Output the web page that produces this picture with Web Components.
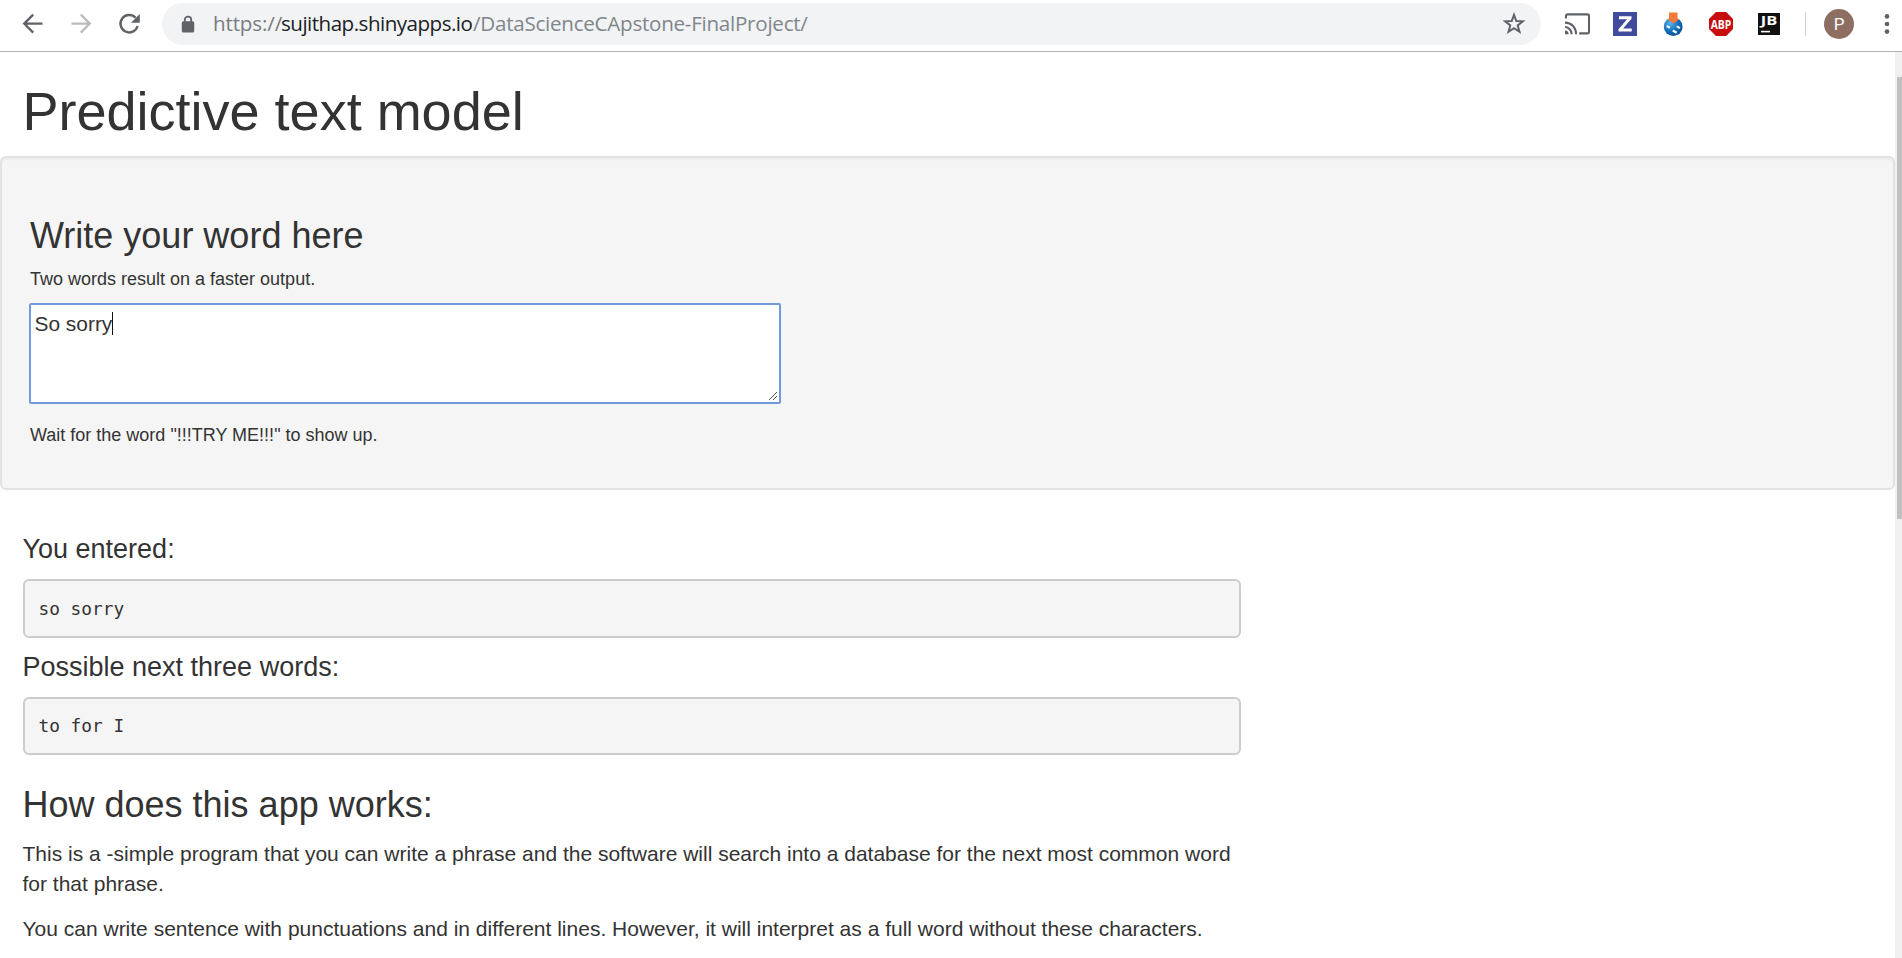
<!DOCTYPE html>
<html lang="en">
<head>
<meta charset="utf-8">
<title>Predictive text model</title>
<style>
html,body{margin:0;height:100%;overflow:hidden;background:#fff}
body{font-family:"Liberation Sans",Arial,sans-serif;color:#333}
</style>
</head>
<body>
<browser-window>
  <browser-toolbar slot="toolbar"></browser-toolbar>
  <predictive-page></predictive-page>
</browser-window>
<script>
function define(name, html) {
  const template = document.createElement('template');
  template.innerHTML = html.trim();
  customElements.define(name, class extends HTMLElement {
    constructor() {
      super();
      this.attachShadow({mode: 'open'}).append(template.content.cloneNode(true));
    }
  });
}

define('browser-window', `
<style>
:host{display:flex;flex-direction:column;height:958px;width:1902px;overflow:hidden}
.view{display:flex;flex:1;min-height:0}
.content{width:1895px;overflow:hidden}
.track{width:7px;background:#f1f1f1;box-sizing:border-box;padding:25px 0 0 2px}
.thumb{height:442px;background:#c1c1c1}
</style>
<slot name="toolbar"></slot>
<div class="view"><div class="content"><slot></slot></div><div class="track"><div class="thumb"></div></div></div>`);

define('browser-toolbar', `
<style>
:host{display:flex;align-items:flex-start;height:51px;flex:none;border-bottom:1px solid #b0b1b3;background:#fff}
svg{display:block;flex:none}
.nav{display:flex;width:162px;height:48px;box-sizing:border-box;padding-left:17px;gap:16px;align-items:center}
.tools{display:flex;height:48px;align-items:center;flex:1;padding-left:20px}
.tools svg{width:32px;height:32px;margin-right:16px}
.sep{width:1px;height:24px;background:#cfcfcf;margin:0 18px 0 4px;flex:none}
.avatar{width:30px;height:30px;border-radius:50%;background:#8d6e63;color:#fff;font:17px/30px Roboto,sans-serif;text-align:center;flex:none}
.tools svg.menu{width:10px;margin:0 0 0 28px}
text{font-family:"Open Sans",sans-serif;font-weight:700;fill:#fff;text-anchor:middle}
</style>
<div class="nav">
  <svg width="32" height="32" viewBox="0 0 32 32" fill="none" stroke="#5f6368" stroke-width="2.3"><path d="M25.5 15.6H7.5M16.2 6.6L7.2 15.6l9 9"/></svg>
  <svg width="32" height="32" viewBox="0 0 32 32" fill="none" stroke="#babcbe" stroke-width="2.3"><path d="M6.5 15.6h18M15.8 6.6l9 9-9 9"/></svg>
  <svg width="32" height="32" viewBox="0 0 32 32"><path d="M22.6 9.8A8.7 8.7 0 1 0 24.6 18" fill="none" stroke="#5f6368" stroke-width="2.4"/><path d="M26.8 6v8.8H18z" fill="#5f6368"/></svg>
</div>
<address-bar></address-bar>
<div class="tools">
  <svg viewBox="0 0 32 32"><g fill="none" stroke="#5f6368" stroke-width="2.1"><path d="M5 10.6V8a1.6 1.6 0 0 1 1.6-1.6h19.8A1.6 1.6 0 0 1 28 8v15.8a1.6 1.6 0 0 1-1.6 1.6h-8.2M4 14.6a11 11 0 0 1 11 11.6M4 19a7 7 0 0 1 6.6 7.2"/></g><path d="M4 22.6a3.6 3.6 0 0 1 3.6 3.6H4z" fill="#5f6368"/></svg>
  <svg viewBox="0 0 32 32"><path d="M4 4h24v24H4z" fill="#404b9d"/><path d="M10 8.2h12.5v2.5l-8.4 9.9h8.6v3H9.5v-2.4l8.5-10H10z" fill="#fff"/></svg>
  <svg viewBox="0 0 32 32"><defs><radialGradient id="b" cx=".35" cy=".3" r=".75"><stop stop-color="#58b6ef"/><stop offset=".55" stop-color="#1772bd"/><stop offset="1" stop-color="#094d8e"/></radialGradient></defs><circle cx="16.2" cy="18.7" r="9.4" fill="url(#b)"/><path d="M10.2 17l3.2 1.8-1 2-3.2-1.7zM16.3 21.5l4 2.2-1.3 2-3.8-2.2zM20 17.4l3.4 1.7-1 2-3.2-1.8z" fill="#eefaff"/><path d="M12 4.6h8.5V11h2.2l-6.3 4.6-6.2-4.6h1.8z" fill="#f47a3a"/></svg>
  <svg viewBox="0 0 32 32"><path d="M11 4h10.2L28 11v10l-6.8 7H11l-7-7V11z" fill="#c70d0d"/><text x="16" y="20.5" font-size="12.4" textLength="20.6" lengthAdjust="spacingAndGlyphs">ABP</text></svg>
  <svg viewBox="0 0 32 32"><path d="M5 5h22v22H5z" fill="#111"/><text x="16" y="17.4" font-size="13" textLength="16.5" lengthAdjust="spacingAndGlyphs">JB</text><path d="M8 22.8h9v1.6H8z" fill="#fff"/></svg>
  <div class="sep"></div>
  <div class="avatar">P</div>
  <svg class="menu" viewBox="0 0 10 32" fill="#5f6368"><circle cx="5" cy="8.4" r="2.3"/><circle cx="5" cy="16" r="2.3"/><circle cx="5" cy="23.6" r="2.3"/></svg>
</div>`);

define('address-bar', `
<style>
:host{display:flex;align-items:center;width:1379px;height:42px;margin-top:3px;border-radius:21px;background:#f1f3f4;flex:none;font:20.6px/42px "Open Sans","Noto Sans",sans-serif;color:#80868b}
svg{display:block;flex:none}
.lock{margin-left:19px;margin-right:18px}
.url{display:flex;flex:1;white-space:pre;height:42px;line-height:41px}
.scheme{color:#777c80;width:68px;letter-spacing:-.15px}
.host{color:#202124;width:192px;letter-spacing:-.52px}
.path{letter-spacing:-.26px}
.star{margin-right:14px}
</style>
<svg class="lock" width="14" height="18" viewBox="0 0 14 18"><path d="M3.8 7V4.8a3.2 3.2 0 0 1 6.4 0V7" fill="none" stroke="#5f6368" stroke-width="1.8"/><rect x=".8" y="6.2" width="12.4" height="11.3" rx="1.6" fill="#5f6368"/></svg>
<div class="url"><span class="scheme">https://</span><span class="host">sujithap.shinyapps.io</span><span class="path">/DataScienceCApstone-FinalProject/</span></div>
<svg class="star" width="26" height="26" viewBox="0 0 26 26"><path d="M13 3.9l2.3 6.1 6.5.3-5.1 4.1 1.8 6.4-5.5-3.6-5.5 3.6 1.8-6.4-5.1-4.1 6.5-.3z" fill="none" stroke="#5f6368" stroke-width="2"/></svg>`);

define('predictive-page', `
<style>
:host{display:block}
h1,h3,h4,p{margin:0;font-weight:400}
h1{font-size:54px;line-height:60px;padding:29px 0 15px 22.5px}
h3{font-size:36px;line-height:40px}
h4{font-size:27px;line-height:30px;margin-bottom:15px}
p{font-size:21px;line-height:30px;margin-bottom:15px}
.small{font-size:18px;line-height:20px}
.results{width:1218px;padding:44px 0 0 22.5px}
.how{margin:30px 0 14px}
well-panel .lead{margin:13px 0 14px}
well-panel .hint{margin-top:21px}
result-box{margin-bottom:14px}
result-box.last{height:58px;padding-top:12px}
</style>
<h1>Predictive text model</h1>
<well-panel>
  <h3>Write your word here</h3>
  <div class="small lead">Two words result on a faster output.</div>
  <phrase-input>So sorry</phrase-input>
  <div class="small hint">Wait for the word "!!!TRY ME!!!" to show up.</div>
</well-panel>
<div class="results">
  <h4>You entered:</h4>
  <result-box>so sorry</result-box>
  <h4>Possible next three words:</h4>
  <result-box class="last">to for I</result-box>
  <h3 class="how">How does this app works:</h3>
  <p>This is a -simple program that you can write a phrase and the software will search into a database for the next most common word for that phrase.</p>
  <p>You can write sentence with punctuations and in different lines. However, it will interpret as a full word without these characters.</p>
</div>`);

define('well-panel', `
<style>
:host{display:block;box-sizing:border-box;height:334px;padding:58px 28px 0;background:#f5f5f5;border:2px solid #e2e2e2;border-radius:6px;box-shadow:inset 0 2px 2px rgba(0,0,0,.04)}
</style><slot></slot>`);

define('phrase-input', `
<style>
:host{display:flex;justify-content:space-between;box-sizing:border-box;width:752px;height:101px;margin-left:-1px;background:#fff;border:2px solid #709ad8;border-radius:2px;font-size:20.9px;line-height:24px;padding:7px 1px 1px 3.5px}
.text{display:flex;align-items:flex-start}
i{width:1px;height:23px;background:#111}
svg{align-self:flex-end}
</style>
<div class="text"><slot></slot><i></i></div>
<svg width="10" height="10" viewBox="0 0 10 10" stroke="#555" stroke-width="1"><path d="M1 9L9 1M5 9l4-4"/></svg>`);

define('result-box', `
<style>
:host{display:block;box-sizing:border-box;height:59px;padding:13px 13px 0 14px;border:2px solid #ccc;border-radius:6px;background:#f5f5f5;font:17.8px/30px "DejaVu Sans Mono",monospace}
</style><slot></slot>`);
</script>
</body>
</html>
